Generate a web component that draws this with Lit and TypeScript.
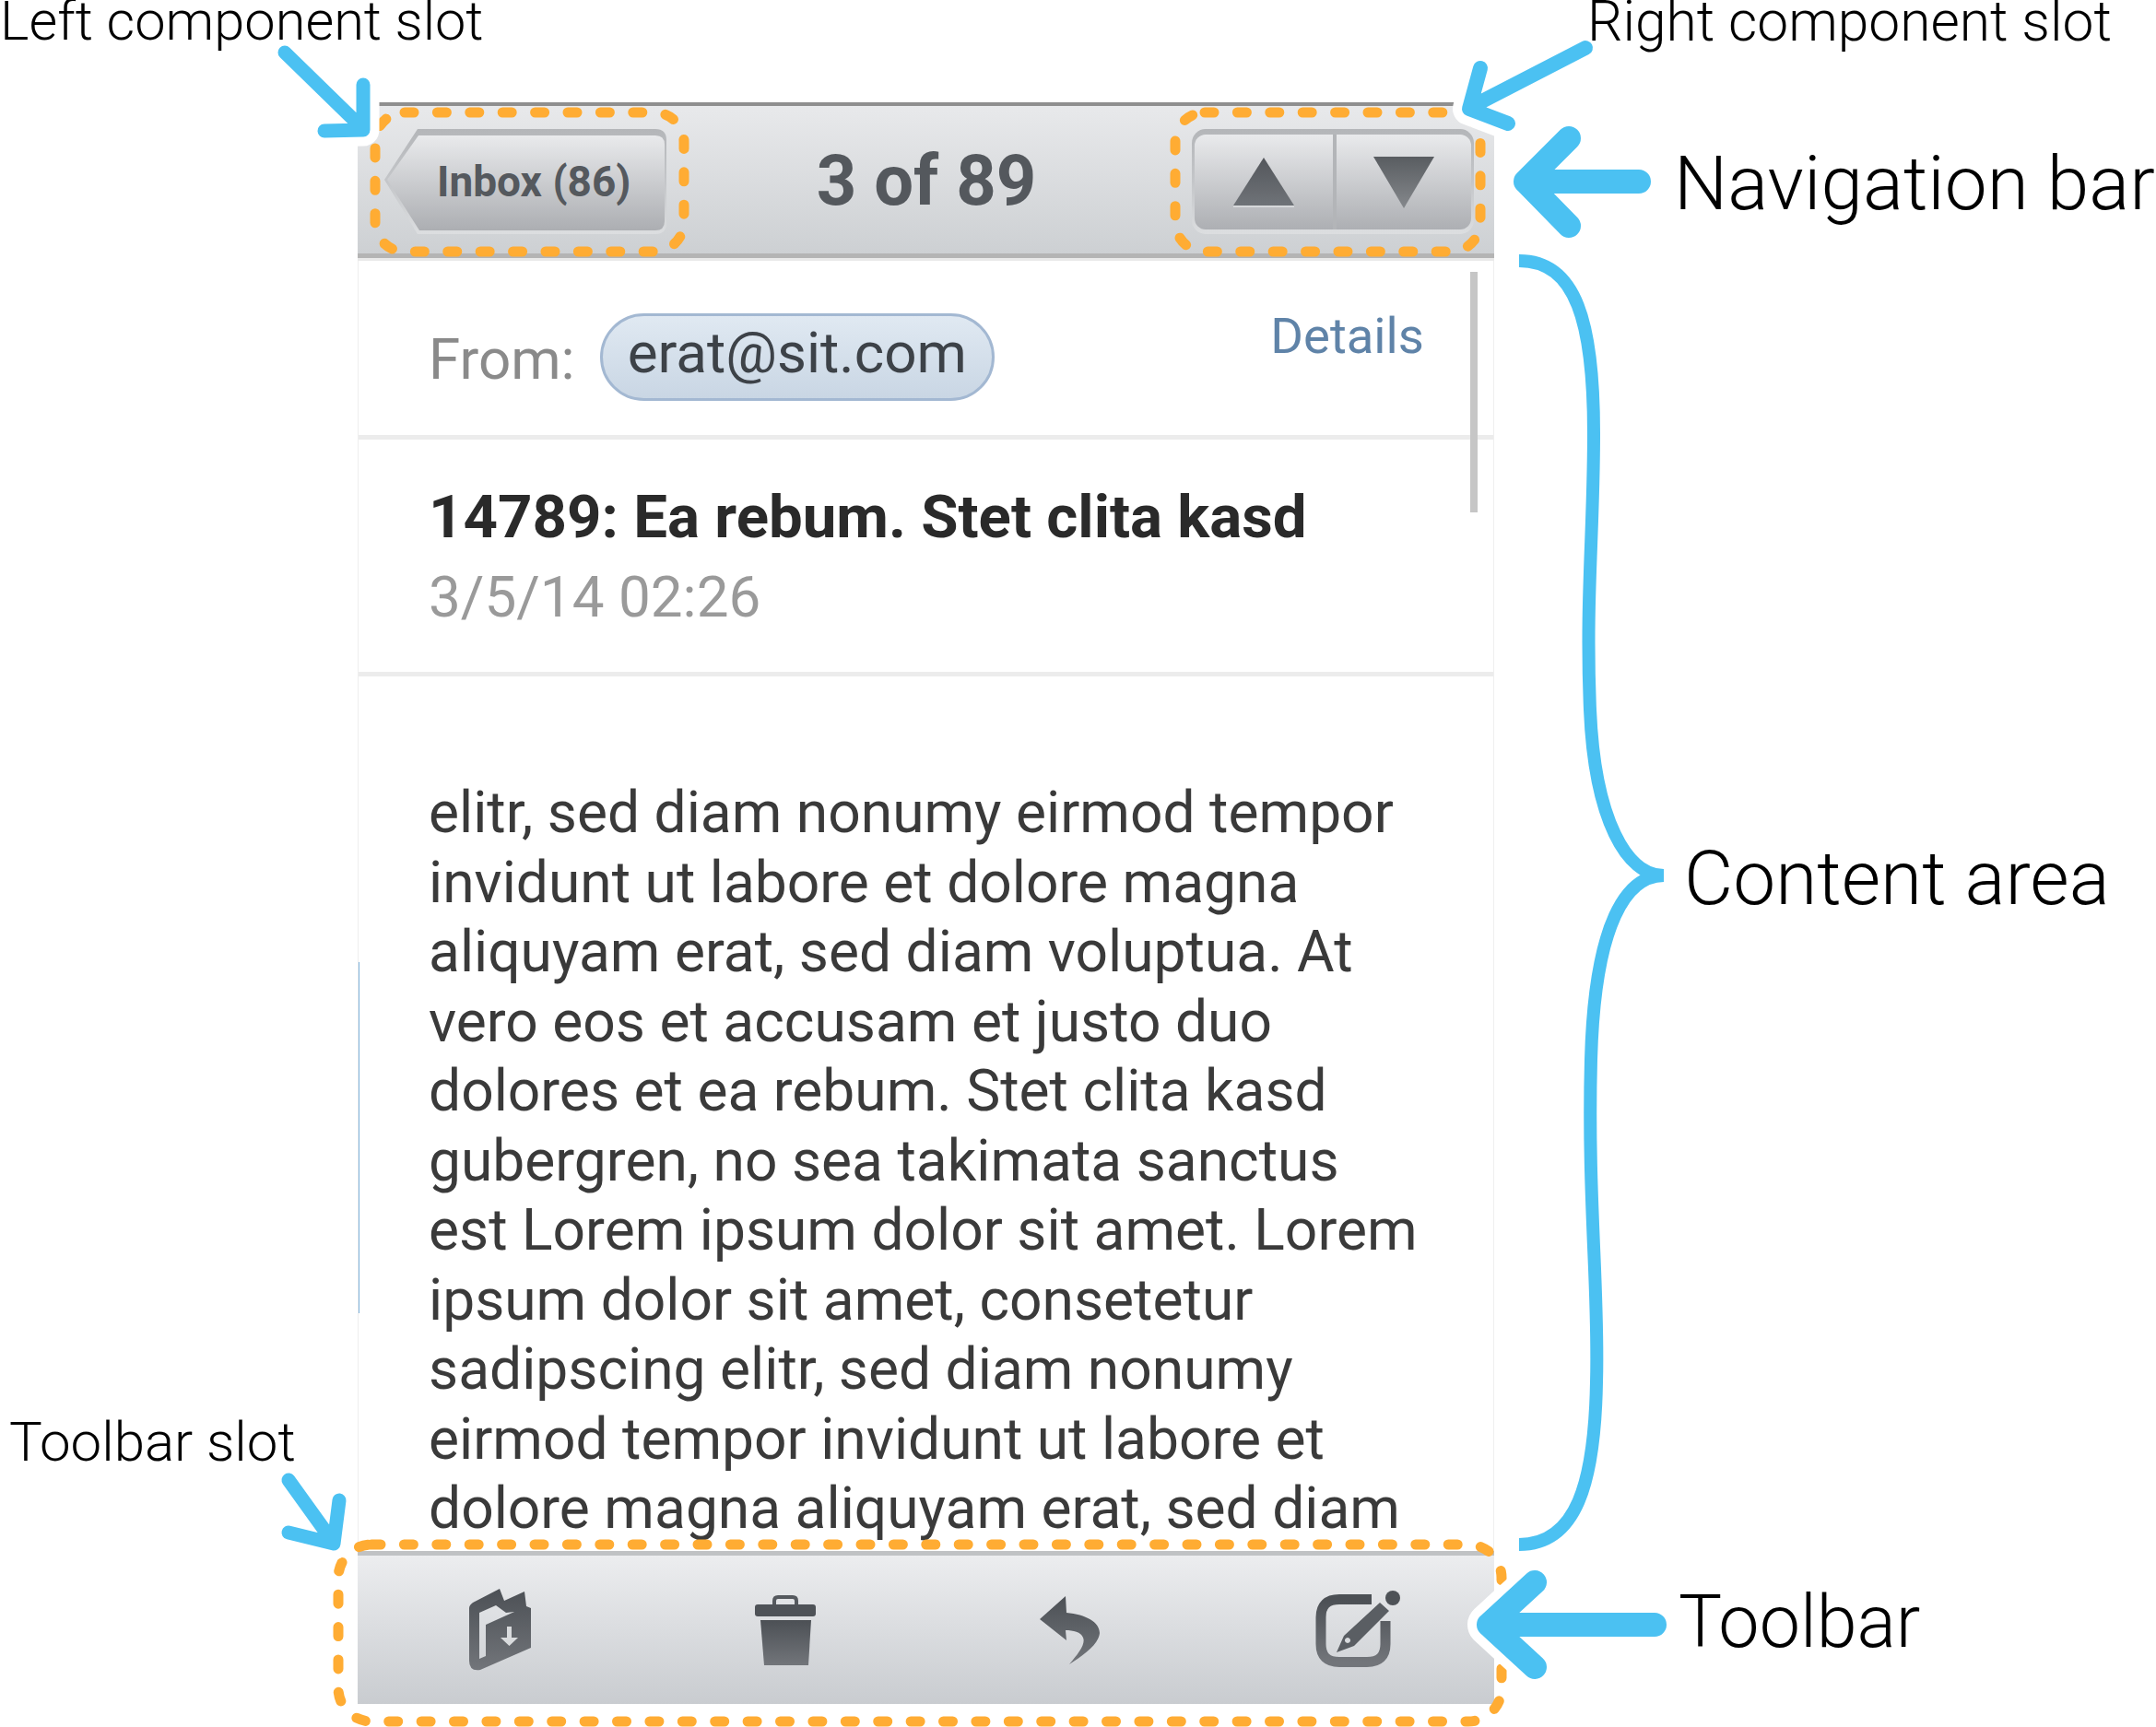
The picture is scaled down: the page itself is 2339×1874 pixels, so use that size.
import { LitElement, html, css, svg } from "lit";
import { customElement } from "lit/decorators.js";

const LINES = [
  "elitr, sed diam nonumy eirmod tempor",
  "invidunt ut labore et dolore magna",
  "aliquyam erat, sed diam voluptua. At",
  "vero eos et accusam et justo duo",
  "dolores et ea rebum. Stet clita kasd",
  "gubergren, no sea takimata sanctus",
  "est Lorem ipsum dolor sit amet. Lorem",
  "ipsum dolor sit amet, consetetur",
  "sadipscing elitr, sed diam nonumy",
  "eirmod tempor invidunt ut labore et",
  "dolore magna aliquyam erat, sed diam",
];

const grad = (id: string, a = "#4c5055", b = "#72757a") => svg`<defs><linearGradient id=${id} x1="0" y1="0" x2="0" y2="1"><stop offset="0" stop-color=${a}/><stop offset="1" stop-color=${b}/></linearGradient></defs>`;

@customElement("app-root")
export class AppRoot extends LitElement {
  static styles = css`
    :host { display: block; width: 2339px; height: 1874px; background: #fff; position: relative; overflow: hidden; }
    .stage { box-sizing: border-box; width: 2339px; height: 1874px; padding: 111px 0 25px 388px; font-family: Roboto, sans-serif; }
    .phone { width: 1233px; height: 100%; display: flex; flex-direction: column; background: #fff; }
    .nav { flex: none; box-sizing: border-box; height: 169px; margin-bottom: 3px; display: grid; grid-template-columns: 1fr auto 1fr; align-items: center;
      background: linear-gradient(#e8e9eb, #cdd0d3); border-top: 4px solid #8f8f8f; border-bottom: 5px solid #b4b4b4; box-shadow: 0 3px 0 #e9e9e9; padding: 4px 22px 0 29px; }
    .back { justify-self: start; width: 306px; height: 114px; box-sizing: border-box; padding: 7px 2px 4px 3px;
      background: linear-gradient(#b4b6b9 0, #c4c6c9 50%, #dcdee0 100%);
      clip-path: path("M36 0 H294 Q306 0 306 12 V102 Q306 114 294 114 H36 L0 55 Z"); }
    .back-face { height: 103px; box-sizing: border-box; padding: 0 0 3px 54px; display: flex; align-items: center;
      font-size: 46px; font-weight: 700; color: #55595e; white-space: nowrap;
      background: linear-gradient(#e9eaec, #acaeb2);
      clip-path: path("M34 0 H291 Q301 0 301 10 V93 Q301 103 291 103 H35 L0 48 Z"); }
    .title { font-size: 76px; font-weight: 700; color: #54585d; white-space: nowrap; padding-bottom: 3px; margin-right: 6px; }
    .pager { justify-self: end; width: 306px; height: 114px; box-sizing: border-box; padding: 6px 3px 5px; border-radius: 15px;
      background: linear-gradient(#b4b6b9 0, #c4c6c9 50%, #dcdee0 100%); }
    .pager-face { height: 100%; display: grid; grid-template-columns: 150px 1fr; border-radius: 12px; overflow: hidden;
      background: linear-gradient(#e9eaec, #adafb3); }
    .pager-face div { display: flex; align-items: center; justify-content: center; }
    .pager-face div + div { border-left: 4px solid #b3b5b8; }
    .content { flex: 1; min-height: 0; overflow: hidden; position: relative; box-sizing: border-box; border-left: 1px solid #efefef; border-right: 1px solid #efefef; }
    .from { box-sizing: border-box; height: 194px; display: flex; align-items: flex-start; padding: 51px 75px 0 76px; border-bottom: 5px solid #ececec; }
    .from-label { font-size: 62px; color: #8a8a8a; margin: 22px 27px 0 0; line-height: 68px; }
    .chip { box-sizing: border-box; height: 95px; margin-top: 6px; padding: 0 27px; border-radius: 48px; border: 3px solid #a3b8d2; background: linear-gradient(#e0e9f2, #c9d6e4);
      font-size: 62px; color: #3d4248; line-height: 80px; }
    .details { margin-left: auto; font-size: 54.500px; color: #5f83a8; line-height: 60px; }
    .subject { box-sizing: border-box; height: 257px; padding: 44px 76px 0; border-bottom: 5px solid #ececec; }
    .subject h1 { margin: 0; font-size: 65.400px; font-weight: 700; line-height: 80px; color: #2a2a2a; white-space: nowrap; }
    .subject p { margin: 11px 0 0; font-size: 62px; line-height: 72px; color: #9a9a9a; }
    .body { padding: 110px 76px 0; font-size: 62.300px; line-height: 75.550px; color: #3a3a3a; white-space: nowrap; }
    .thumb { position: absolute; right: 17px; top: 12px; width: 8px; height: 261px; background: #c6c6c6; }
    .edge { position: absolute; left: -1px; top: 761px; width: 2px; height: 381px; background: #7fb3dc; }
    .toolbar { flex: none; box-sizing: border-box; height: 166px; display: grid; grid-template-columns: 309px 309px 309px 306px; align-items: center;
      background: linear-gradient(#ecedef, #c9ccd0); border-top: 5px solid #c0c2c4; }
    .toolbar div { display: flex; justify-content: center; align-items: center; }
    .compose { margin-left: 11px; }
    svg { display: block; }
    .overlay { position: absolute; left: 0; top: 0; }
    .label { position: absolute; font-family: Roboto, sans-serif; font-weight: 300; color: #000; line-height: 1; white-space: nowrap; }
    .l-left { left: 0; top: 0; font-size: 59.500px; line-height: 0.8; }
    .l-right { left: 1722px; top: 0; font-size: 60.500px; line-height: 0.8; }
    .l-nav { left: 1816px; top: 158px; font-size: 82px; }
    .l-content { left: 1827px; top: 912px; font-size: 82px; }
    .l-toolbar { left: 1821px; top: 1721px; font-size: 79px; }
    .l-slot { left: 10px; top: 1535px; font-size: 60px; }
  `;

  private arrow(shaft: string, head: string, w: number) {
    return svg`
      <path d="${shaft} ${head}" fill="none" stroke="#fff" stroke-width=${w + 20} stroke-linecap="round" stroke-linejoin="round"/>
      <path d="${shaft} ${head}" fill="none" stroke="#4bc1f2" stroke-width=${w} stroke-linecap="round" stroke-linejoin="round"/>`;
  }

  render() {
    return html`
      <div class="stage">
        <div class="phone">
          <div class="nav">
            <div class="back"><div class="back-face">Inbox (86)</div></div>
            <div class="title">3 of 89</div>
            <div class="pager">
              <div class="pager-face">
                <div><svg width="66" height="54" viewBox="0 0 66 54">${grad("u", "#53565b", "#6f7378")}<path d="M33 0 L66 52 H0 Z" fill="url(#u)"/><path d="M0 52 H66 V54 H0 Z" fill="#d6d8da"/></svg></div>
                <div><svg width="66" height="56" viewBox="0 0 66 56">${grad("d", "#595d61", "#85888c")}<path d="M0 0 H66 L33 56 Z" fill="url(#d)"/></svg></div>
              </div>
            </div>
          </div>
          <div class="content">
            <div class="from">
              <span class="from-label">From:</span>
              <span class="chip">erat@sit.com</span>
              <span class="details">Details</span>
            </div>
            <div class="subject">
              <h1>14789: Ea rebum. Stet clita kasd</h1>
              <p>3/5/14 02:26</p>
            </div>
            <div class="body">${LINES.map((l) => html`<div>${l}</div>`)}</div>
            <div class="thumb"></div>
            <div class="edge"></div>
          </div>
          <div class="toolbar">
            <div>
              <svg width="67" height="90" viewBox="0 0 67 90">${grad("a")}
                <path fill-rule="evenodd" fill="url(#a)" d="M0 21 Q0 18 4 15 L33 0 L38 13 L60 3 L62 19 L67 21 V64 L12 88 Q0 90 0 78 Z M11 26 V76 L18 73 V39 L49 25 L40 26 L29 18 Z"/>
                <path fill="#d9dbdd" d="M41 41 H46 V53 H53 L43.500 62 L34 53 H41 Z"/>
              </svg>
            </div>
            <div>
              <svg width="66" height="77" viewBox="0 0 66 77">${grad("t")}
                <path d="M21 12 V7 Q21 3 25 3 H41 Q45 3 45 7 V12" fill="none" stroke="#55595e" stroke-width="4"/>
                <rect x="0" y="11" width="66" height="13" rx="3" fill="#4e5257"/>
                <path d="M6 28 H61 L58 77 H10 Z" fill="url(#t)"/>
              </svg>
            </div>
            <div>
              <svg width="65" height="74" viewBox="0 0 65 74">${grad("r")}
                <path fill="url(#r)" d="M0 25 L28 0 L29 18 C50 20 65 28 65 40 C64 52 48 64 32 74 C42 62 50 52 47 45 C45 39 36 37 28 37 L29 48 Z"/>
              </svg>
            </div>
            <div>
              <svg class="compose" width="93" height="85" viewBox="0 0 93 85">${grad("c")}
                <path d="M61 9.500 H26 Q6 9.500 6 29 V58 Q6 77.500 26 77.500 H56 Q76 77.500 76 58 V33" fill="none" stroke="url(#c)" stroke-width="11"/>
                <path fill-rule="evenodd" fill="#5a5e63" d="M23 67 L31 49 L70 13 L80 22 L42 60 Z M35 51 A3 3 0 1 0 35.010 51 Z"/>
                <circle cx="84" cy="8" r="8" fill="#4e5257"/>
              </svg>
            </div>
          </div>
        </div>
      </div>

      <svg class="overlay" width="2339" height="1874" viewBox="0 0 2339 1874">
        <g fill="none" stroke="#ffac33" stroke-width="11" stroke-linecap="round" stroke-dasharray="10 25.400">
          <rect x="407" y="122" width="335" height="151" rx="32"/>
          <rect x="1275" y="122" width="331" height="151" rx="32"/>
          <rect x="367" y="1676" width="1262" height="192" rx="36"/>
        </g>
        ${this.arrow("M309 57 L390 136", "M394 92 L394 141 L352 142", 15)}
        ${this.arrow("M1720 52 L1596 116", "M1606 74 L1594 118 L1636 134", 16)}
        ${this.arrow("M1778 197 H1655", "M1702 150 L1655 197 L1702 245", 26)}
        ${this.arrow("M1795 1763 H1615", "M1665 1717 L1615 1763 L1665 1809", 26)}
        ${this.arrow("M313 1606 L359 1670", "M368 1628 L362 1675 L313 1663", 15)}
        <path d="M1648 283 C1710 283 1729 350 1729 470 C1729 580 1720 650 1725 770 C1730 890 1765 950 1805 950 C1765 950 1730 1000 1726 1150 C1722 1300 1735 1400 1732 1500 C1730 1610 1710 1676 1648 1676"
          fill="none" stroke="#4bc1f2" stroke-width="14"/>
      </svg>
      <div class="label l-left">Left component slot</div>
      <div class="label l-right">Right component slot</div>
      <div class="label l-nav">Navigation bar</div>
      <div class="label l-content">Content area</div>
      <div class="label l-toolbar">Toolbar</div>
      <div class="label l-slot">Toolbar slot</div>
    `;
  }
}
